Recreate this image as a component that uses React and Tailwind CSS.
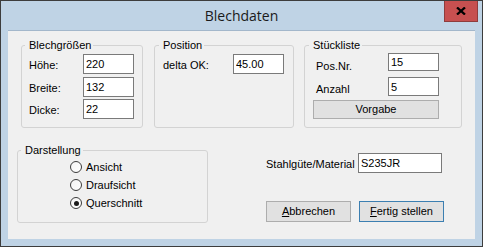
import React from 'react';

// Small WinForms-ish building blocks
function Field({ value, className = '' }) {
  return (
    <input
      readOnly
      value={value}
      className={`border border-[#7a7a7a] bg-white px-[2px] text-[11px] leading-[13px] text-black outline-none ${className}`}
    />
  );
}

function Group({ title, className = '', children }) {
  return (
    <fieldset className={`rounded-[3px] border border-[#d3d3d3] ${className}`}>
      <legend className="-ml-[4px] pl-[4px] pr-[2px] text-[11px] leading-[13px] text-black">{title}</legend>
      {children}
    </fieldset>
  );
}

function Button({ children, primary = false, className = '' }) {
  return (
    <button
      className={`border bg-[#e1e1e1] text-[11px] leading-[13px] text-black ${primary ? 'border-[#3c7fb1]' : 'border-[#adadad]'} ${className}`}
    >
      {children}
    </button>
  );
}

function Radio({ label, checked = false }) {
  return (
    <div className="flex h-[18px] items-center">
      <span className="ml-[45px] flex h-[12px] w-[12px] items-center justify-center rounded-full border border-[#3c3c3c] bg-gradient-to-br from-[#f4f4f4] to-white">
        {checked && <span className="h-[5px] w-[5px] rounded-full bg-[#1a1a1a]" />}
      </span>
      <span className="ml-[4px] text-[11px] leading-[13px]">{label}</span>
    </div>
  );
}

export default function App() {
  return (
    <div className="flex h-[247px] w-[483px] flex-col border border-[#3d3d3d] bg-[#bfd3e5] font-['Liberation_Sans',Arial,sans-serif] text-black">
      {/* Title bar */}
      <div className="grid h-[29px] grid-cols-[1fr_auto_1fr]">
        <div />
        <div className="self-center font-['Open_Sans',sans-serif] text-[14px] leading-[18px] text-[#1a1a1a]">Blechdaten</div>
        <div className="flex justify-end pr-[4px]">
          <button className="flex h-[21px] w-[34px] items-center justify-center border border-t-0 border-[#8f3c3c] bg-[#c75050]">
            <svg width="10" height="8" viewBox="0 0 10 8">
              <path d="M1 0.5 L9 7.5 M9 0.5 L1 7.5" stroke="#000" strokeWidth="2.3" />
            </svg>
          </button>
        </div>
      </div>

      {/* Client area */}
      <div className="mx-[7px] h-[209px] w-[467px] border-t border-[#a3b7cb] bg-[#f0f0f0]">
        <div className="flex pl-[13px] pt-[8px]">
          <Group title="Blechgrößen" className="h-[89px] w-[122px] px-[7px] pt-[2px]">
            <div className="flex h-[20px] items-center">
              <span className="mt-[2px] w-[54px] text-[11px] leading-[13px]">Höhe:</span>
              <Field value="220" className="h-[20px] w-[51px]" />
            </div>
            <div className="mt-[3px] flex h-[20px] items-center">
              <span className="mt-[2px] w-[54px] text-[11px] leading-[13px]">Breite:</span>
              <Field value="132" className="h-[20px] w-[51px]" />
            </div>
            <div className="mt-[2px] flex h-[20px] items-center">
              <span className="mt-[2px] w-[54px] text-[11px] leading-[13px]">Dicke:</span>
              <Field value="22" className="h-[20px] w-[51px]" />
            </div>
          </Group>

          <Group title="Position" className="ml-[11px] h-[89px] w-[140px] px-[8px] pt-[2px]">
            <div className="flex h-[20px] items-center">
              <span className="mt-[2px] w-[70px] text-[11px] leading-[13px]">delta OK:</span>
              <Field value="45.00" className="h-[20px] w-[51px]" />
            </div>
          </Group>

          <Group title="Stückliste" className="ml-[10px] h-[89px] w-[158px] px-[8px] pt-[1px]">
            <div className="flex h-[18px] items-center">
              <span className="ml-[3px] mt-[8px] w-[72px] text-[11px] leading-[13px]">Pos.Nr.</span>
              <Field value="15" className="h-[18px] w-[51px]" />
            </div>
            <div className="mt-[6px] flex h-[19px] items-center">
              <span className="ml-[3px] mt-[6px] w-[72px] text-[11px] leading-[13px]">Anzahl</span>
              <Field value="5" className="h-[19px] w-[51px]" />
            </div>
            <Button className="mt-[3px] h-[19px] w-[126px]">Vorgabe</Button>
          </Group>
        </div>

        <div className="mt-[16px] flex pl-[9px]">
          <Group title="Darstellung" className="h-[79px] w-[191px] px-[7px] pt-[1px]">
            <Radio label="Ansicht" />
            <Radio label="Draufsicht" />
            <Radio label="Querschnitt" checked />
          </Group>

          <div className="ml-[58px] flex flex-col pt-[9px]">
            <div className="flex h-[20px] items-center">
              <span className="mt-[2px] w-[92px] text-[11px] leading-[13px]">Stahlgüte/Material</span>
              <Field value="S235JR" className="h-[20px] w-[84px]" />
            </div>
            <div className="mt-[28px] flex gap-[8px]">
              <Button className="h-[21px] w-[85px]"><span className="underline">A</span>bbrechen</Button>
              <Button primary className="h-[21px] w-[85px]"><span className="underline">F</span>ertig stellen</Button>
            </div>
          </div>
        </div>
      </div>
    </div>
  );
}
